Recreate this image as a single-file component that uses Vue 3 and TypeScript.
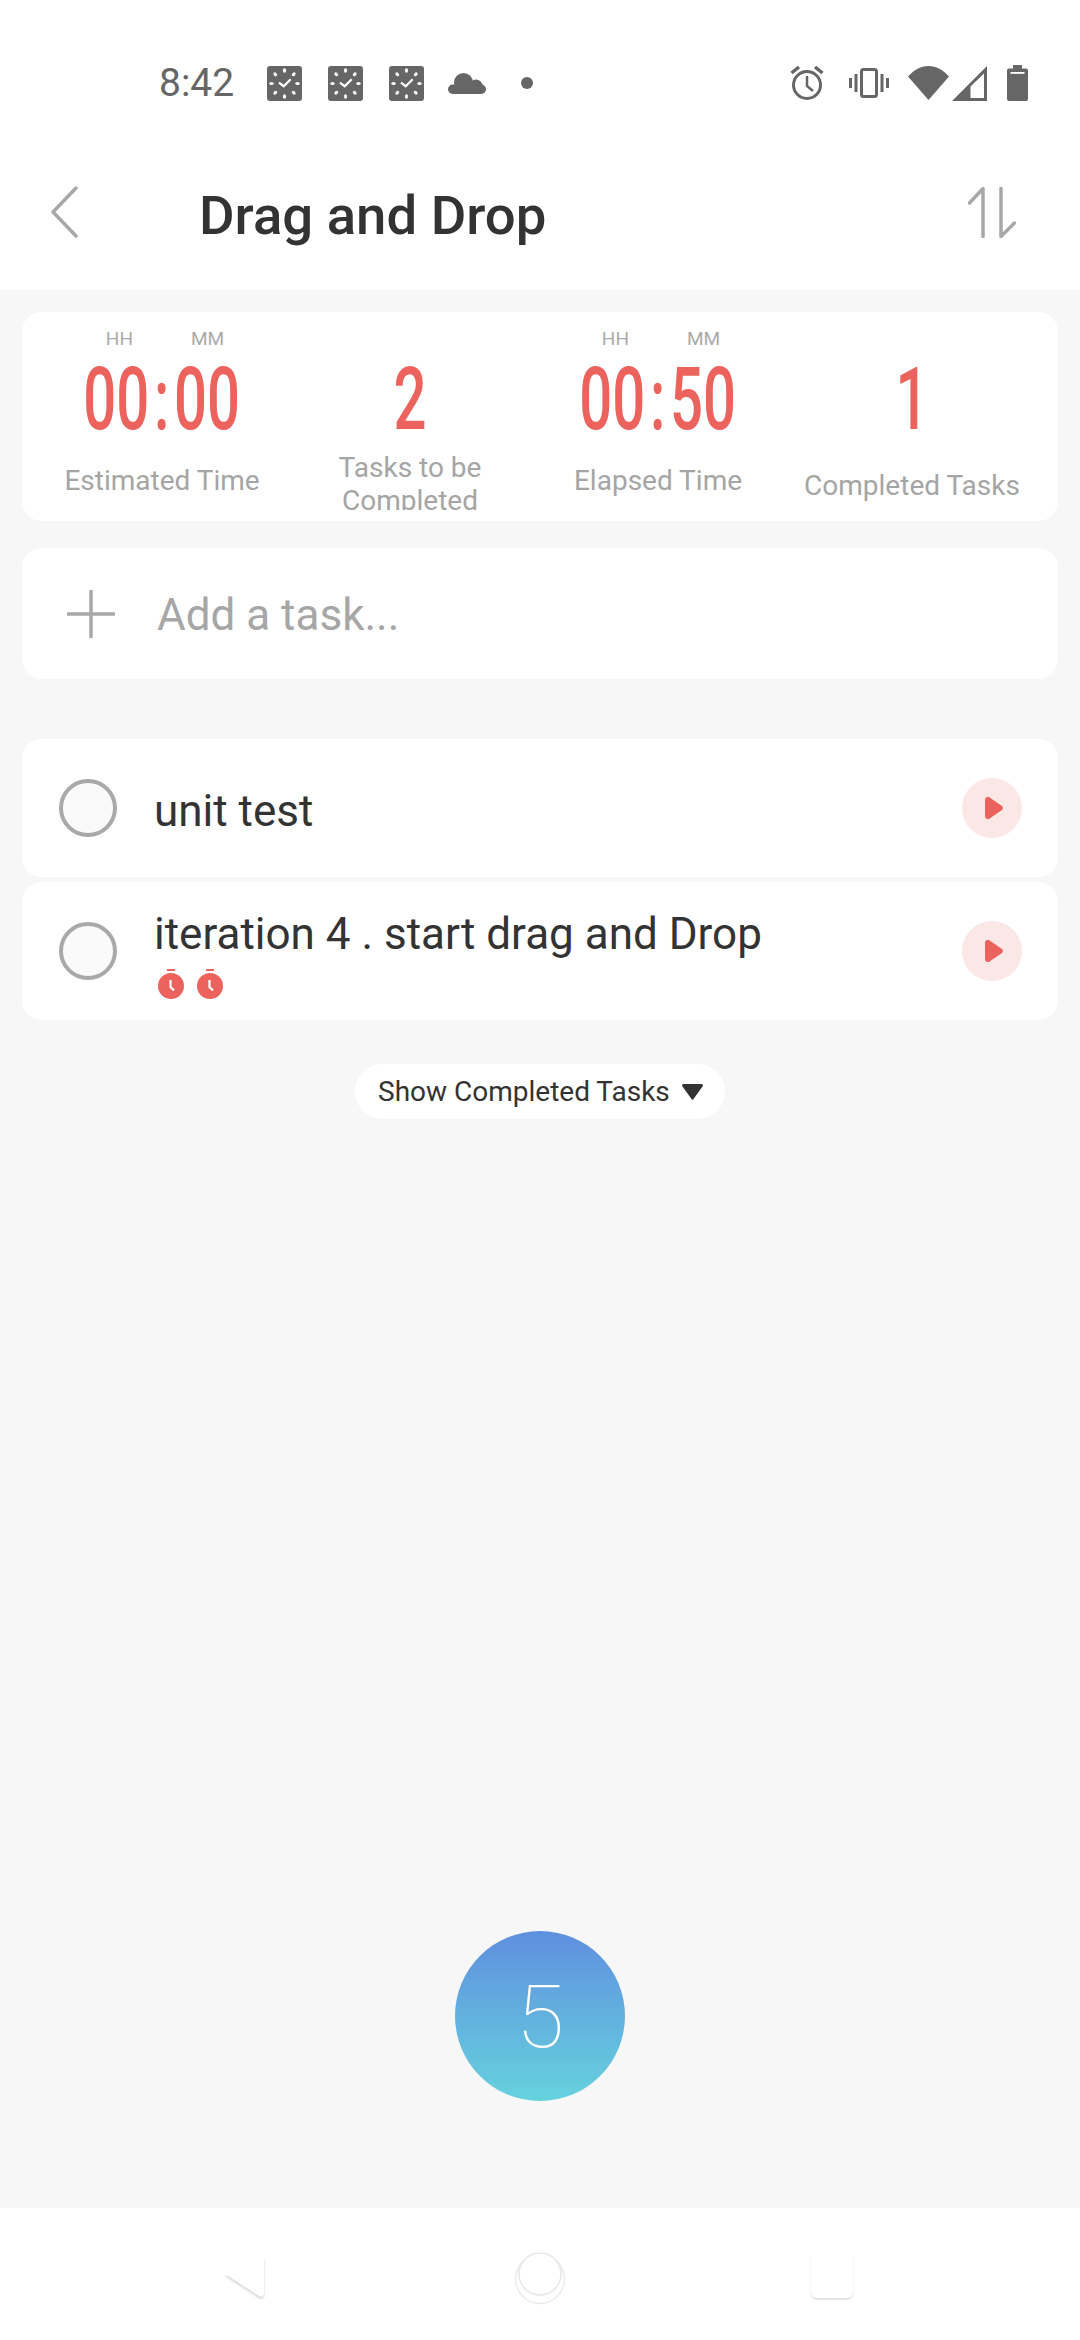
<script setup lang="ts">
const clocks = [0, 1, 2];
const ticks = [0, 45, 90, 135, 180, 225, 270, 315];

interface Stat {
  value: string;
  label: string;
  kind: string;
}
const stats: Stat[] = [
  { value: "00:00", label: "Estimated Time", kind: "timer" },
  { value: "2", label: "Tasks to be Completed", kind: "count" },
  { value: "00:50", label: "Elapsed Time", kind: "timer" },
  { value: "1", label: "Completed Tasks", kind: "done" },
];

const tasks = [
  { title: "unit test", pomodoros: 0 },
  { title: "iteration 4 . start drag and Drop", pomodoros: 2 },
];
</script>

<template>
  <div class="screen">
    <div class="status">
      <span class="time">8:42</span>
      <div class="notifs">
        <svg v-for="c in clocks" :key="c" class="clock" width="35" height="35" viewBox="0 0 35 35">
          <rect width="35" height="35" rx="3" fill="#666" />
          <ellipse
            v-for="t in ticks"
            :key="t"
            cx="17.500"
            cy="4.500"
            rx="1.600"
            ry="2.200"
            fill="#fff"
            :transform="`rotate(${t} 17.5 17.5)`"
          />
          <path d="M12 16.700l4.700 3.500 7-7" fill="none" stroke="#fff" stroke-width="2.200" />
        </svg>
        <svg class="cloud" width="38" height="21" viewBox="0 0 38 21" fill="#666">
          <circle cx="15.500" cy="9.500" r="9.500" />
          <circle cx="28" cy="13" r="6.500" />
          <rect x="0" y="11.500" width="38" height="9.500" rx="4.700" />
        </svg>
        <span class="dot"></span>
      </div>
      <div class="sys">
        <svg width="34" height="36" viewBox="0 0 34 36" fill="none" stroke="#666">
          <circle cx="17" cy="20" r="13.500" stroke-width="3" />
          <path d="M17 11v10l6 5" stroke-width="2.500" />
          <path d="M9 2L1.500 8M25 2l7.500 6" stroke-width="3.500" />
        </svg>
        <svg class="vib" width="40" height="30" viewBox="0 0 40 30" fill="none" stroke="#666">
          <rect x="12.500" y="1.500" width="15" height="27" rx="2" stroke-width="3" />
          <path d="M7 6v18M1.500 10v10M33 6v18M38.500 10v10" stroke-width="3" />
        </svg>
        <svg class="wifi" width="41" height="34" viewBox="0 0 41 34">
          <path d="M0 10.500C6 4 13 0 20.500 0S35 4 41 10.500L20.500 34z" fill="#666" />
        </svg>
        <svg class="signal" width="35" height="35" viewBox="0 0 35 35">
          <path d="M35 0v35H0zM18.500 20.500V32H32V7.500z" fill="#666" fill-rule="evenodd" />
        </svg>
        <svg class="batt" width="21" height="36" viewBox="0 0 21 36">
          <path
            d="M6 0h9v3.500h4a2 2 0 0 1 2 2V34a2 2 0 0 1-2 2H2a2 2 0 0 1-2-2V5.500a2 2 0 0 1 2-2h4z"
            fill="#666"
          />
          <rect x="3.500" y="7" width="14" height="1.800" fill="#fff" />
        </svg>
      </div>
    </div>

    <header class="topbar">
      <svg class="back" width="27" height="52" viewBox="0 0 27 52" fill="none">
        <path d="M25 2L2 26l23 24" stroke="#a8a8a8" stroke-width="3.500" stroke-linecap="round" stroke-linejoin="round" />
      </svg>
      <h1 class="title">Drag and Drop</h1>
      <svg class="sort" width="48" height="51" viewBox="0 0 48 51" fill="none">
        <path
          d="M1.500 16L15 1.500V49.500M33 1.500V49.500L46.500 36"
          stroke="#a8a8a8"
          stroke-width="3.500"
          stroke-linecap="round"
          stroke-linejoin="round"
        />
      </svg>
    </header>

    <main class="content">
      <section class="card stats">
        <div v-for="s in stats" :key="s.label" class="stat" :class="`stat--${s.kind}`">
          <div class="units">
            <template v-if="s.kind === 'timer'">
              <span>HH</span>
              <span>MM</span>
            </template>
          </div>
          <div class="value">
            <span class="value__inner">
              <template v-if="s.kind === 'timer'">{{ s.value.split(":")[0] }}<i class="colon">:</i>{{ s.value.split(":")[1] }}</template>
              <template v-else>{{ s.value }}</template>
            </span>
          </div>
          <div class="label">{{ s.label }}</div>
        </div>
      </section>

      <section class="card add">
        <svg width="48" height="48" viewBox="0 0 48 48">
          <path d="M24 1v46M1 24h46" stroke="#a8a8a8" stroke-width="3.500" stroke-linecap="round" />
        </svg>
        <span class="add__text">Add a task...</span>
      </section>

      <ul class="tasks">
        <li v-for="t in tasks" :key="t.title" class="card task">
          <span class="check"></span>
          <div class="task__body">
            <div class="task__title">{{ t.title }}</div>
            <div v-if="t.pomodoros" class="pomos">
              <svg v-for="n in t.pomodoros" :key="n" width="26" height="30" viewBox="0 0 26 30">
                <rect x="9" y="0" width="8" height="2" fill="#ec635d" />
                <circle cx="13" cy="17" r="13" fill="#ec635d" />
                <path d="M12.500 11v7l3.500 3.500" fill="none" stroke="#fff" stroke-width="2.200" />
              </svg>
            </div>
          </div>
          <span class="play">
            <svg width="18" height="22" viewBox="0 0 18 22">
              <path
                d="M0 3a3 3 0 0 1 5.300-2L17 9a3 3 0 0 1 0 4L5.300 21A3 3 0 0 1 0 19z"
                fill="#ec635d"
              />
            </svg>
          </span>
        </li>
      </ul>

      <div class="more">
        <div class="more__pill">
          <span>Show Completed Tasks</span>
          <svg width="21" height="16" viewBox="0 0 21 16">
            <path d="M1.500 0h18a1.500 1.500 0 0 1 1.200 2.300L11.500 15a1.200 1.200 0 0 1-2 0L.3 2.300A1.500 1.500 0 0 1 1.500 0z" fill="#333" />
          </svg>
        </div>
      </div>

      <div class="fab"><span>5</span></div>
    </main>

    <nav class="navbar">
      <svg width="41" height="45" viewBox="0 0 41 45" class="nav-ic">
        <path d="M40 1v38a3 3 0 0 1-5 2L1 19z" fill="#fff" />
      </svg>
      <svg width="52" height="54" viewBox="0 0 52 54" fill="none" class="home">
        <circle cx="26" cy="28" r="24.500" stroke="#ececec" stroke-width="1.500" />
        <circle cx="26" cy="23" r="21" fill="#fff" stroke="#e8e8e8" stroke-width="1.500" />
      </svg>
      <span class="recents"></span>
    </nav>
  </div>
</template>

<style scoped>
.screen {
  width: 1080px;
  height: 2340px;
  display: flex;
  flex-direction: column;
  background: #f7f7f7;
  font-family: Roboto, "Liberation Sans", sans-serif;
  color: #333;
  overflow: hidden;
}

.status {
  height: 130px;
  flex: none;
  background: #fff;
  display: flex;
  align-items: center;
  padding: 36px 52px 0 159px;
  box-sizing: border-box;
  color: #666;
}
.time {
  font-size: 39px;
  width: 108px;
}
.notifs {
  display: flex;
  align-items: center;
  gap: 26px;
  flex: 1;
}
.cloud {
  margin-left: -2px;
}
.dot {
  width: 12px;
  height: 12px;
  border-radius: 50%;
  background: #666;
  margin-left: 9px;
}
.sys {
  display: flex;
  align-items: center;
}
.vib {
  margin-left: 25px;
}
.wifi {
  margin-left: 19px;
}
.signal {
  margin-left: 3px;
}
.batt {
  margin-left: 20px;
}

.topbar {
  height: 160px;
  flex: none;
  background: #fff;
  display: flex;
  align-items: center;
  padding: 4px 64px 0 51px;
  box-sizing: border-box;
}
.title {
  margin: 6px 0 0 121px;
  flex: 1;
  font-size: 54.500px;
  font-weight: 500;
  color: #333;
}

.content {
  flex: 1;
  position: relative;
  padding: 22px 22px 0;
  display: flex;
  flex-direction: column;
}
.card {
  background: #fff;
  border-radius: 20px;
}

.stats {
  height: 209px;
  display: grid;
  grid-template-columns: 248px 248px 248px 260px;
  padding: 0 16px;
  box-sizing: border-box;
  flex: none;
}
.stat {
  display: flex;
  flex-direction: column;
  align-items: center;
  height: 198px;
  overflow: hidden;
}
.units {
  flex: none;
  height: 54px;
  padding-top: 17px;
  box-sizing: border-box;
  display: flex;
  gap: 58px;
  font-size: 19px;
  color: #aaa;
  line-height: 20px;
  margin-left: 6px;
}
.value {
  flex: none;
  height: 64px;
  display: flex;
  justify-content: center;
  color: #ec635d;
  font-size: 88px;
  font-weight: 500;
  line-height: 64px;
}
.value__inner {
  display: block;
  margin-top: 1px;
  transform: scaleX(0.66);
}
.colon {
  font-style: normal;
  margin: 0 7px;
}
.label {
  flex: none;
  width: 210px;
  text-align: center;
  font-size: 28px;
  line-height: 33px;
  color: #a5a5a5;
}
.stat--timer .label {
  margin-top: 34px;
}
.stat--count .label {
  margin-top: 21px;
}
.stat--done .label {
  margin-top: 39px;
  width: 240px;
}

.add {
  margin-top: 27px;
  height: 131px;
  flex: none;
  display: flex;
  align-items: center;
  padding-left: 45px;
  gap: 42px;
}
.add__text {
  font-size: 44px;
  color: #a6a6a6;
  margin-top: 2px;
}

.tasks {
  list-style: none;
  margin: 60px 0 0;
  padding: 0;
  display: flex;
  flex-direction: column;
  gap: 5px;
}
.task {
  height: 138px;
  display: flex;
  align-items: center;
  padding: 0 36px 0 37px;
  box-sizing: border-box;
}
.check {
  width: 58px;
  height: 58px;
  box-sizing: border-box;
  border: 4px solid #a9a9a9;
  border-radius: 50%;
  background: #fafafa;
  flex: none;
}
.task__body {
  flex: 1;
  margin-left: 37px;
  padding-top: 6px;
}
.task__title {
  font-size: 44px;
  line-height: 50px;
}
.pomos {
  display: flex;
  gap: 13px;
  margin: 10px 0 0 4px;
}
.play {
  width: 60px;
  height: 60px;
  border-radius: 50%;
  background: #fbe7e6;
  display: flex;
  align-items: center;
  justify-content: center;
  flex: none;
}
.play svg {
  margin-left: 4px;
}

.more {
  display: flex;
  justify-content: center;
  margin-top: 44px;
}
.more__pill {
  height: 55px;
  width: 370px;
  border-radius: 28px;
  background: #fff;
  display: flex;
  align-items: center;
  gap: 12px;
  padding-left: 23px;
  box-sizing: border-box;
  font-size: 28px;
}

.fab {
  position: absolute;
  left: 455px;
  top: 1641px;
  width: 170px;
  height: 170px;
  border-radius: 50%;
  background: linear-gradient(#5f8fdf, #66d2de);
  color: #fff;
  display: flex;
  align-items: center;
  justify-content: center;
  font-size: 88px;
  font-weight: 100;
}

.navbar {
  height: 132px;
  flex: none;
  background: #fff;
  display: grid;
  grid-template-columns: repeat(3, 1fr);
  align-items: center;
  justify-items: center;
  padding: 7px 96px 0;
  box-sizing: border-box;
}
.nav-ic {
  filter: drop-shadow(0 2px 1px rgba(0, 0, 0, 0.16));
}
.recents {
  width: 42px;
  height: 41px;
  margin-right: 8px;
  background: #fff;
  border-radius: 0 0 6px 6px;
  box-shadow: 0 2px 2px rgba(0, 0, 0, 0.12);
}
</style>

<style>
html,
body {
  margin: 0;
  background: #f7f7f7;
}
</style>
